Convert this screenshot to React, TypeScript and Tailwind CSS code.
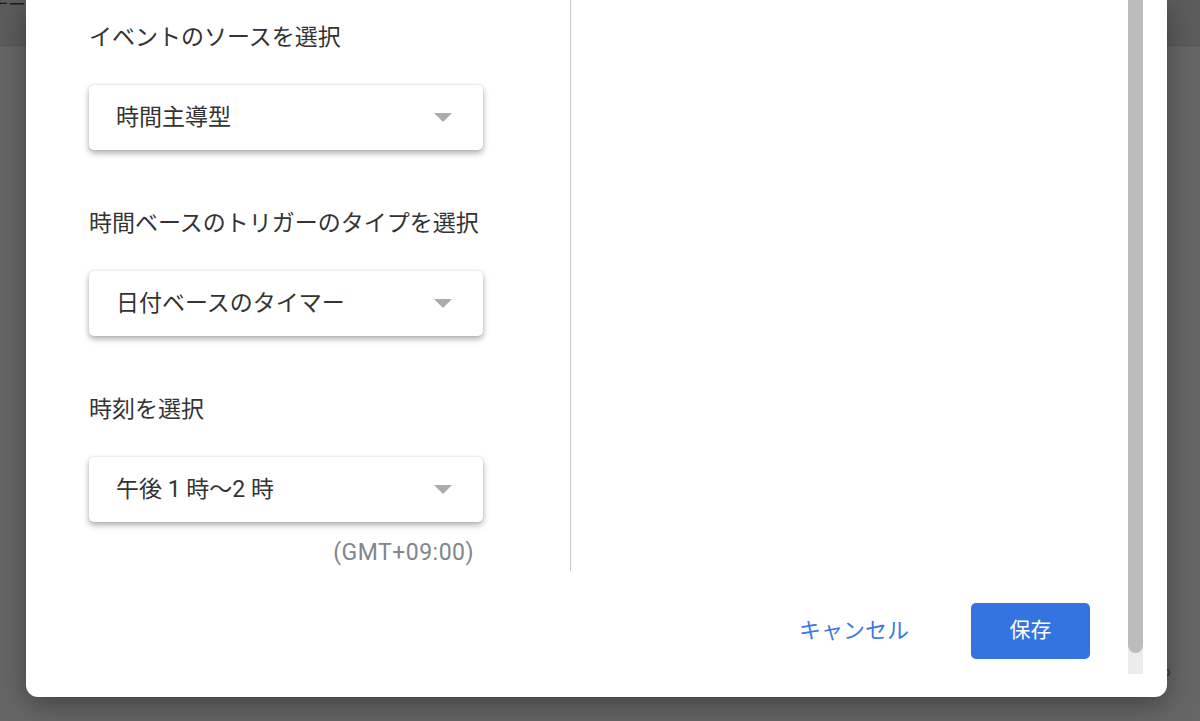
const font = { fontFamily: 'Roboto, "Noto Sans CJK JP", sans-serif' };

function Select({ value }: { value: string }) {
  return (
    <div className="mt-[31px] flex h-[65px] w-[394px] items-center justify-between rounded-[5px] bg-white pl-[27px] pr-[31px] shadow-[0_3px_6px_rgba(0,0,0,0.33),0_0_2px_rgba(0,0,0,0.12)]">
      <span className="text-[23px] leading-[32px] text-[#333]">{value}</span>
      <span className="h-0 w-0 border-l-[9px] border-r-[9px] border-t-[9px] border-l-transparent border-r-transparent border-t-[#ababab]" />
    </div>
  );
}

export default function App() {
  return (
    <div className="relative h-[721px] w-[1200px] overflow-hidden bg-[#666]" style={font}>
      {/* page under the overlay */}
      <div className="flex h-[46px] border-b border-[#555] bg-[#5c5c5c]">
        <span className="-ml-[10px] -mt-[6px] text-[18px] leading-[22px] text-[#1c1c1c]">チー</span>
      </div>
      <span className="absolute left-[1163px] top-[662px] text-[13px] text-[#1f3055]">o</span>

      {/* dialog */}
      <div className="absolute left-[26px] top-0 flex h-[697px] w-[1141px] rounded-b-[12px] bg-white shadow-[0_8px_28px_rgba(0,0,0,0.35)]">
        <div className="flex flex-1 flex-col">
          <div className="flex h-[571px]">
            <div className="flex w-[545px] flex-col border-r border-[#c9c9c9] pl-[63px] pt-[22px]">
              <div className="text-[23px] leading-[32px] text-[#333]">イベントのソースを選択</div>
              <Select value="時間主導型" />

              <div className="mt-[58px] text-[23px] leading-[32px] text-[#333]">
                時間ベースのトリガーのタイプを選択
              </div>
              <Select value="日付ベースのタイマー" />

              <div className="mt-[58px] text-[23px] leading-[32px] text-[#333]">時刻を選択</div>
              <Select value="午後 1 時〜2 時" />

              <div className="mt-[16px] w-[394px] pr-[9px] text-right text-[23px] leading-[30px] tracking-[0.5px] text-[#80868b]">
                (GMT+09:00)
              </div>
            </div>
            <div className="flex-1" />
          </div>

          <div className="flex items-center justify-end gap-[62px] pr-[38px] pt-[32px]">
            <button className="text-[22px] leading-[28px] text-[#3b78e7]">キャンセル</button>
            <button className="h-[56px] w-[119px] rounded-[5px] bg-[#3474e0] text-[21px] text-white">
              保存
            </button>
          </div>
        </div>

        {/* scrollbar */}
        <div className="mr-[24px] flex h-[674px] w-[15px] flex-col bg-[#ececec]">
          <div className="h-[653px] rounded-b-full bg-[#bcbcbc]" />
        </div>
      </div>
    </div>
  );
}
